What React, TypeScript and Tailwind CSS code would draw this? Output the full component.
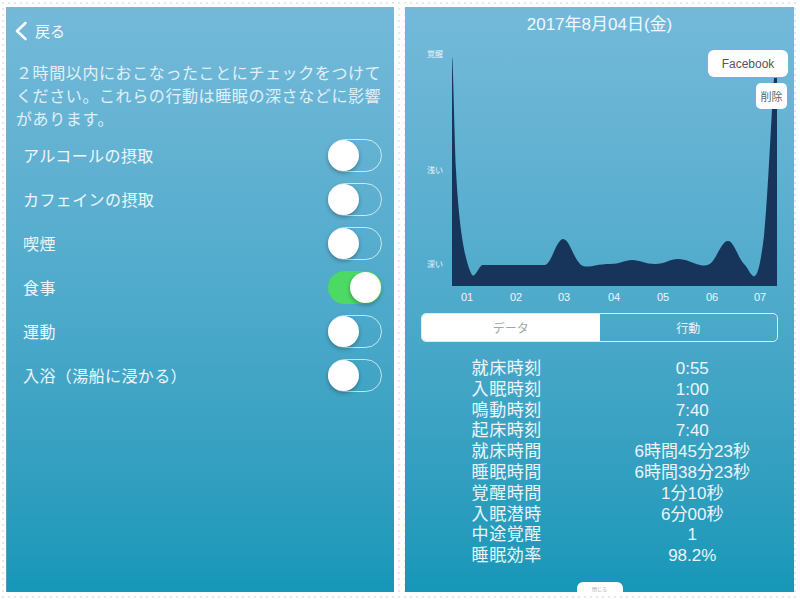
import React from "react";

const jp = { fontFamily: '"Noto Sans CJK JP", "Noto Sans", sans-serif' };
const mix = { fontFamily: '"Liberation Sans", "Noto Sans CJK JP", sans-serif' };

function Toggle({ on }: { on: boolean }) {
  if (on) {
    return (
      <div className="w-[54px] h-[33px] rounded-full bg-[#4cd964] flex items-center justify-end pr-[1px] shrink-0">
        <div className="w-[31px] h-[31px] rounded-full bg-white shadow-[0_2px_4px_rgba(0,0,0,0.3)]" />
      </div>
    );
  }
  return (
    <div className="w-[54px] h-[33px] rounded-full border-[1.5px] border-white/70 flex items-center shrink-0">
      <div className="w-[31px] h-[31px] -ml-[1.5px] rounded-full bg-white shadow-[0_2px_4px_rgba(0,0,0,0.3)]" />
    </div>
  );
}

const items: [string, boolean][] = [
  ["アルコールの摂取", false],
  ["カフェインの摂取", false],
  ["喫煙", false],
  ["食事", true],
  ["運動", false],
  ["入浴（湯船に浸かる）", false],
];

const data: [string, string][] = [
  ["就床時刻", "0:55"],
  ["入眠時刻", "1:00"],
  ["鳴動時刻", "7:40"],
  ["起床時刻", "7:40"],
  ["就床時間", "6時間45分23秒"],
  ["睡眠時間", "6時間38分23秒"],
  ["覚醒時間", "1分10秒"],
  ["入眠潜時", "6分00秒"],
  ["中途覚醒", "1"],
  ["睡眠効率", "98.2%"],
];

const xLabels = [
  ["01", 467],
  ["02", 516],
  ["03", 564],
  ["04", 614],
  ["05", 663],
  ["06", 712],
  ["07", 760],
] as const;

function LeftPanel() {
  return (
    <div className="w-[388px] h-[585px] shrink-0 flex flex-col bg-gradient-to-b from-[#74b9d9] via-[#4eaacb] to-[#1597b8] text-white border-l border-[#9ab]/40" style={jp}>
      <div className="flex items-center gap-[7px] pl-[7px] pt-[14px] h-[33px]">
        <svg width="14" height="20" viewBox="0 0 14 20">
          <polyline points="11.5,2 3,10 11.5,18" fill="none" stroke="white" strokeWidth="2.6" strokeLinecap="round" strokeLinejoin="round" />
        </svg>
        <span className="text-[15px] text-white/90 leading-none">戻る</span>
      </div>
      <p className="mt-[21px] pl-[9px] pr-[4px] text-[16px] leading-[23px] tracking-[0.6px] text-white/80">
        ２時間以内におこなったことにチェックをつけてください。これらの行動は睡眠の深さなどに影響があります。
      </p>
      <div className="mt-[3px] flex flex-col">
        {items.map(([label, on]) => (
          <div key={label} className="h-[44px] flex items-center justify-between pl-[16px] pr-[12px]">
            <span className="text-[16px] tracking-[0.4px] text-white/90">{label}</span>
            <Toggle on={on} />
          </div>
        ))}
      </div>
    </div>
  );
}

function Chart() {
  const ox = 405;
  const oy = 40;
  return (
    <div className="relative h-[272px] w-full">
      <svg className="absolute inset-0" width="389" height="272" viewBox="405 40 389 272">
        <path
          d="M452,286 L452,57 C453,57 454,120 456,170 C459,230 465,262 472,275 C475,278 478,268 482,265 L545,265 C552,263 556,240 563,239 C570,239 574,262 583,266 C590,268 596,264 610,264 C620,264 625,260 632,260 C640,260 645,264 655,264 C665,264 670,259 678,259 C686,259 692,263 700,265 C705,266 708,266 712,262 C718,255 722,241 728,241 C734,241 738,258 744,264 C748,268 750,274 753,276 C757,278 760,268 764,236 C768,196 771,120 774,78 L777,78 L777,286 Z"
          fill="#17355a"
        />
      </svg>
      <span className="absolute text-[8px] leading-none text-white/85" style={{ ...jp, left: 427 - ox, top: 50 - oy }}>覚醒</span>
      <span className="absolute text-[8px] leading-none text-white/85" style={{ ...jp, left: 427 - ox, top: 166 - oy }}>浅い</span>
      <span className="absolute text-[8px] leading-none text-white/85" style={{ ...jp, left: 427 - ox, top: 260 - oy }}>深い</span>
      {xLabels.map(([t, x]) => (
        <span key={t} className="absolute text-[11px] leading-none text-white/90 -translate-x-1/2" style={{ ...mix, left: x - ox, top: 292 - oy }}>
          {t}
        </span>
      ))}
      <div className="absolute left-[303px] top-[10px] w-[80px] h-[27px] rounded-[6px] bg-white flex items-center justify-center text-[12px] text-[#555]" style={mix}>
        Facebook
      </div>
      <div className="absolute left-[351px] top-[43px] w-[31px] h-[26px] rounded-[5px] bg-white flex items-center justify-center text-[11px] text-[#666]" style={jp}>
        削除
      </div>
    </div>
  );
}

function RightPanel() {
  return (
    <div className="w-[389px] h-[585px] shrink-0 flex flex-col bg-gradient-to-b from-[#74b9d9] via-[#4eaacb] to-[#1597b8] text-white">
      <div className="h-[33px] pt-[8px] text-center text-[17px] leading-[20px] text-white/90" style={mix}>
        2017年8月04日(金)
      </div>
      <Chart />
      <div className="mx-[16px] mt-[1px] h-[29px] flex rounded-[5px] border-[1.5px] border-white/80 overflow-hidden text-[12px]" style={jp}>
        <div className="flex-1 bg-white text-[#9aa] flex items-center justify-center">データ</div>
        <div className="flex-1 text-white/90 flex items-center justify-center">行動</div>
      </div>
      <div className="mt-[17px] grid grid-cols-2 px-[9px] text-[17px] leading-[20.8px] text-white/90" style={mix}>
        {data.map(([k, v]) => (
          <React.Fragment key={k}>
            <div className="text-center tracking-[0.6px]">{k}</div>
            <div className="text-center">{v}</div>
          </React.Fragment>
        ))}
      </div>
      <div className="mt-auto self-center w-[46px] h-[10px] rounded-t-[6px] bg-white flex items-end justify-center">
        <span className="text-[5px] leading-[6px] text-[#aaa]" style={jp}>閉じる</span>
      </div>
    </div>
  );
}

export default function App() {
  return (
    <div className="w-[800px] h-[600px] bg-white bg-[radial-gradient(circle,#e6e9eb_1px,transparent_1.6px)] bg-size-[6px_6px] flex gap-[11px] pl-[6px] pt-[7px] overflow-hidden">
      <LeftPanel />
      <RightPanel />
    </div>
  );
}
